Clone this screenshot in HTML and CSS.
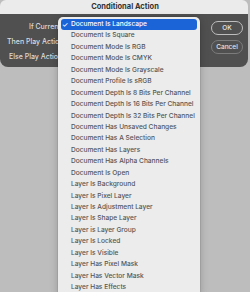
FILE: index.html
```html
<!DOCTYPE html>
<html lang="en">
  <head>
    <meta charset="UTF-8" />
    <title>Conditional Action</title>
    <link rel="stylesheet" href="styles.css">
  </head>
  <body>
    <div class="window">
      <div class="titlebar">Conditional Action</div>
      <div class="dialog">
        <div class="fields">
          <div class="field field-if">If Current:</div>
          <div class="field field-then">Then Play Action:</div>
          <div class="field field-else">Else Play Action:</div>
        </div>
        <div class="buttons">
          <button class="btn btn-ok">OK</button>
          <button class="btn">Cancel</button>
        </div>
      </div>
    </div>

    <ul class="menu">
      <li class="selected"><span class="check">&#10003;</span>Document Is Landscape</li>
      <li>Document Is Square</li>
      <li>Document Mode Is RGB</li>
      <li>Document Mode Is CMYK</li>
      <li>Document Mode Is Grayscale</li>
      <li>Document Profile Is sRGB</li>
      <li>Document Depth Is 8 Bits Per Channel</li>
      <li>Document Depth Is 16 Bits Per Channel</li>
      <li>Document Depth Is 32 Bits Per Channel</li>
      <li>Document Has Unsaved Changes</li>
      <li>Document Has A Selection</li>
      <li>Document Has Layers</li>
      <li>Document Has Alpha Channels</li>
      <li>Document Is Open</li>
      <li>Layer Is Background</li>
      <li>Layer Is Pixel Layer</li>
      <li>Layer Is Adjustment Layer</li>
      <li>Layer Is Shape Layer</li>
      <li>Layer is Layer Group</li>
      <li>Layer Is Locked</li>
      <li>Layer Is Visible</li>
      <li>Layer Has Pixel Mask</li>
      <li>Layer Has Vector Mask</li>
      <li>Layer Has Effects</li>
    </ul>
  </body>
</html>
```

FILE: styles.css
```css
html,
body {
  height: 100%;
}

body {
  margin: 0;
  background-color: #bdbdbd;
  font-family: "Inter", "Liberation Sans", sans-serif;
  overflow: hidden;
  position: relative;
}

.window {
  width: 248px;
  border-radius: 0 0 8px 8px;
  overflow: hidden;
}

.titlebar {
  height: 14px;
  line-height: 13px;
  background-color: #ebebeb;
  color: #333;
  font-size: 7.5px;
  font-weight: 700;
  text-align: center;
  border-radius: 6px 6px 0 0;
  padding-left: 2px;
}

.dialog {
  display: flex;
  justify-content: space-between;
  background-color: #505050;
  height: 53px;
  padding: 0 5px 0 0;
}

.fields {
  display: flex;
  flex-direction: column;
  padding-top: 7px;
  gap: 4px;
  width: 80px;
  overflow: hidden;
}

.field {
  color: #dcdcdc;
  font-size: 7px;
  font-weight: 500;
  height: 11px;
  line-height: 11px;
  white-space: nowrap;
}

.field-if {
  padding-left: 29px;
}

.field-then {
  padding-left: 7px;
}

.field-else {
  padding-left: 9px;
}

.buttons {
  display: flex;
  flex-direction: column;
  gap: 5px;
  padding-top: 7px;
}

.btn {
  width: 32px;
  height: 14px;
  padding: 0;
  border-radius: 7px;
  border: 1px solid #7c7c7c;
  background: transparent;
  color: #e6e6e6;
  font-family: inherit;
  font-size: 6.5px;
  font-weight: 500;
}

.btn-ok {
  border-color: #bdbdbd;
}

.menu {
  position: absolute;
  top: 17px;
  left: 58px;
  width: 142px;
  margin: 0;
  padding: 2px 0;
  list-style: none;
  background-color: #ececec;
  border-radius: 5px;
  box-shadow: 0 2px 8px rgba(0, 0, 0, 0.22), 0 0 0 0.5px rgba(0, 0, 0, 0.12);
}

.menu li {
  height: 11.45px;
  line-height: 11.45px;
  padding-left: 10px;
  margin: 0 3px;
  color: #555;
  font-size: 6.6px;
  font-weight: 500;
  white-space: nowrap;
  position: relative;
}

.menu li.selected {
  background-color: #1b64d8;
  color: #fff;
  border-radius: 3px;
}

.check {
  position: absolute;
  left: 1px;
  top: 0;
  font-size: 7px;
}
```
